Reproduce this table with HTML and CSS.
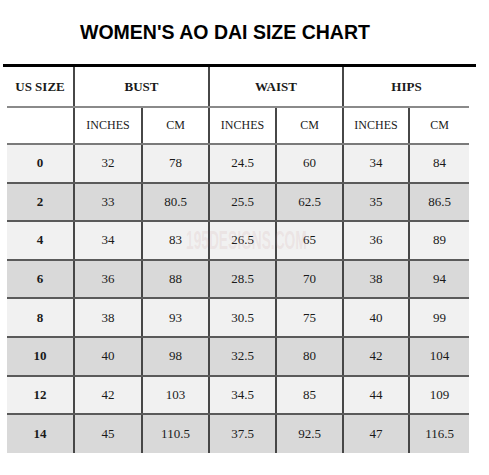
FILE: index.html
```html
<!DOCTYPE html>
<html lang="en">
<head>
  <meta charset="UTF-8">
  <meta name="viewport" content="width=device-width, initial-scale=1.0">
  <title>Women's Ao Dai Size Chart</title>
  <link rel="stylesheet" href="styles.css">
</head>
<body>
  <h1 class="chart-title">WOMEN'S AO DAI SIZE CHART</h1>
  <div class="chart">
    <table class="size-table">
      <colgroup>
        <col class="col-size">
        <col class="col-bust-in">
        <col class="col-bust-cm">
        <col class="col-waist-in">
        <col class="col-waist-cm">
        <col class="col-hips-in">
        <col class="col-hips-cm">
      </colgroup>
      <thead>
        <tr class="head-row">
          <th>US SIZE</th>
          <th colspan="2" class="sep">BUST</th>
          <th colspan="2" class="sep">WAIST</th>
          <th colspan="2" class="sep">HIPS</th>
        </tr>
        <tr class="unit-row">
          <th></th>
          <th class="sep">INCHES</th>
          <th class="sep">CM</th>
          <th class="sep">INCHES</th>
          <th class="sep">CM</th>
          <th class="sep">INCHES</th>
          <th class="sep">CM</th>
        </tr>
      </thead>
      <tbody>
        <tr class="row-light"><td class="size">0</td><td>32</td><td>78</td><td>24.5</td><td>60</td><td>34</td><td>84</td></tr>
        <tr class="row-dark"><td class="size">2</td><td>33</td><td>80.5</td><td>25.5</td><td>62.5</td><td>35</td><td>86.5</td></tr>
        <tr class="row-light"><td class="size">4</td><td>34</td><td>83</td><td>26.5</td><td>65</td><td>36</td><td>89</td></tr>
        <tr class="row-dark"><td class="size">6</td><td>36</td><td>88</td><td>28.5</td><td>70</td><td>38</td><td>94</td></tr>
        <tr class="row-light"><td class="size">8</td><td>38</td><td>93</td><td>30.5</td><td>75</td><td>40</td><td>99</td></tr>
        <tr class="row-dark"><td class="size">10</td><td>40</td><td>98</td><td>32.5</td><td>80</td><td>42</td><td>104</td></tr>
        <tr class="row-light"><td class="size">12</td><td>42</td><td>103</td><td>34.5</td><td>85</td><td>44</td><td>109</td></tr>
        <tr class="row-dark"><td class="size">14</td><td>45</td><td>110.5</td><td>37.5</td><td>92.5</td><td>47</td><td>116.5</td></tr>
      </tbody>
    </table>
    <span class="watermark">195DESIGNS.COM</span>
  </div>
</body>
</html>
```

FILE: styles.css
```css
* {
  margin: 0;
  padding: 0;
  box-sizing: border-box;
}

body {
  background: #fff;
  color: #1a1a1a;
  font-family: "Liberation Serif", "Times New Roman", serif;
}

.chart-title {
  margin: 22px 0 22px;
  padding-left: 80px;
  font-family: "Liberation Sans", Arial, sans-serif;
  font-size: 19.5px;
  line-height: 20px;
  font-weight: bold;
  color: #000;
}

.chart {
  position: relative;
  width: 473px;
  margin-left: 3px;
  border-top: 3px solid #000;
}

.size-table {
  margin-left: 4px;
  width: 462px;
  table-layout: fixed;
  border-collapse: collapse;
  text-align: center;
}

.col-size { width: 67px; }
.col-bust-in { width: 68px; }
.col-bust-cm { width: 67px; }
.col-waist-in { width: 67px; }
.col-waist-cm { width: 67px; }
.col-hips-in { width: 66px; }
.col-hips-cm { width: 60px; }

.size-table th,
.size-table td {
  padding: 0;
  vertical-align: middle;
}

.sep,
.size-table td + td {
  border-left: 2px solid #474747;
}

.head-row th {
  height: 40px;
  font-size: 13px;
  font-weight: bold;
  border-bottom: 2px solid #8a8a8a;
}

.unit-row th {
  height: 37px;
  font-size: 12px;
  font-weight: normal;
  border-bottom: 2px solid #7a7a7a;
}

.size-table td {
  height: 38.6px;
  font-size: 13px;
  border-bottom: 2px solid #5a5a5a;
}

.size-table tbody tr:last-child td {
  border-bottom: none;
}

.size-table td.size {
  font-weight: bold;
}

.row-light {
  background: #f1f1f1;
}

.row-dark {
  background: #d9d9d9;
}

.watermark {
  position: absolute;
  left: 183px;
  top: 161px;
  font-family: "Liberation Sans", sans-serif;
  font-size: 25px;
  line-height: 25px;
  font-weight: bold;
  color: rgba(200, 140, 140, 0.14);
  transform: scaleX(0.55);
  transform-origin: left top;
  white-space: nowrap;
  pointer-events: none;
}
```
